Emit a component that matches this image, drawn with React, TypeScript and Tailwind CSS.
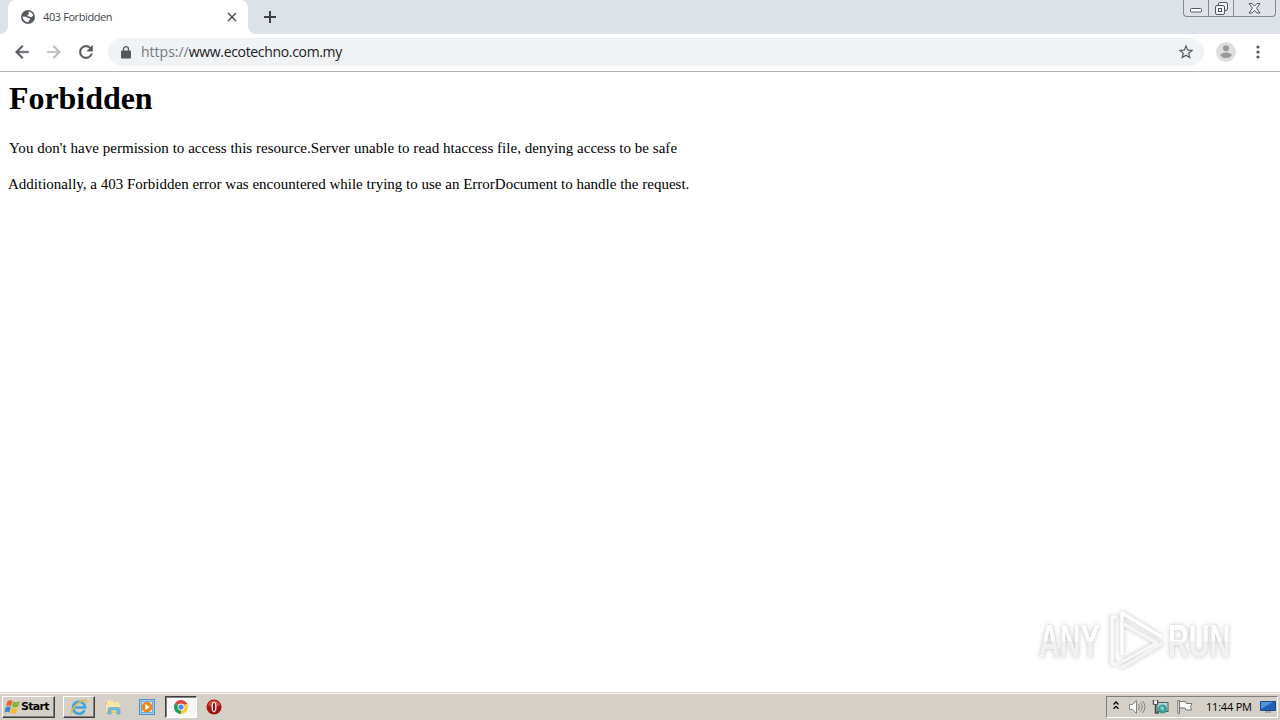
import React from 'react';

const WindowControls: React.FC = () => (
  <div className="flex h-[17px] w-[93px] rounded-b-[4px] border border-t-0 border-[#858990] bg-[#dfe2e8]">
    <div className="flex w-[25px] justify-center border-r border-[#858990] pt-[8px]">
      <svg width="13" height="5" viewBox="0 0 13 5" fill="#fff" stroke="#50545e">
        <rect x="0.5" y="0.5" width="11" height="3.5" rx="1" />
      </svg>
    </div>
    <div className="flex w-[25px] justify-center border-r border-[#858990] pt-[2px]">
      <svg width="13" height="13" viewBox="0 0 13 13" fill="#f5f6f8" stroke="#50545e">
        <rect x="3.5" y="0.5" width="9" height="8" rx="1.5" />
        <rect x="0.5" y="3.5" width="9" height="9" rx="1.5" />
        <rect x="3.5" y="6.5" width="3" height="3" />
      </svg>
    </div>
    <div className="flex flex-1 justify-center pt-[3px]">
      <svg width="13" height="11" viewBox="0 0 13 11" fill="#f5f6f8" stroke="#50545e">
        <path d="M1 .5h3l2.5 2.7L9 .5h3L8.5 5.2l3.5 4.8H9L6.5 7.3 4 10H1l3.5-4.8z" />
      </svg>
    </div>
  </div>
);

const TabStrip: React.FC = () => (
  <div className="flex h-[34px] bg-[#dde1e8]">
    <div className="flex w-2 items-end bg-white">
      <div className="h-full w-2 rounded-br-[8px] bg-[#dde1e8]" />
    </div>
    <div className="flex w-[240px] items-center rounded-t-[8px] bg-white pl-[13px] pr-[11px]">
      <svg className="shrink-0" width="14" height="14" viewBox="0 0 14 14">
        <circle cx="7" cy="7" r="7" fill="#585b60" />
        <path d="M7.6 1.4c2.4.3 4.3 2 4.8 4.4l-1.2.5-.9 1-1.7-.8-1.8-.3-.2-1.4 1.2-.6V3z" fill="#fff" />
        <path d="M1.5 6.6l3.6.2 1.7 1.1 1.8.3.5 1.4-1.3 1-.5 1.7c-2.9.2-5.4-2.2-5.8-5.7z" fill="#fff" />
      </svg>
      <span className="ml-[8px] whitespace-nowrap font-['Open_Sans'] text-[11px] tracking-[-0.4px] text-[#43464b]">403 Forbidden</span>
      <svg className="ml-auto shrink-0" width="10" height="10" viewBox="0 0 10 10" stroke="#55585d" strokeWidth="1.7">
        <path d="M1 1l8 8M9 1L1 9" />
      </svg>
    </div>
    <div className="flex w-2 bg-white">
      <div className="h-full w-2 rounded-bl-[8px] bg-[#dde1e8]" />
    </div>
    <svg className="ml-[7px] mt-[10px]" width="14" height="14" viewBox="0 0 14 14" stroke="#3c4045" strokeWidth="2">
      <path d="M7 1v12M1 7h12" />
    </svg>
    <div className="ml-auto pr-[4px]">
      <WindowControls />
    </div>
  </div>
);

const Toolbar: React.FC = () => (
  <div className="flex h-[38px] items-center border-b border-[#b3b3b3] bg-white pb-[1px] pl-[12px] pr-[12px]">
    <svg width="20" height="20" viewBox="0 0 24 24" fill="#55585d" stroke="#55585d" strokeWidth="0.5">
      <path d="M20 11H7.83l5.59-5.59L12 4l-8 8 8 8 1.41-1.41L7.83 13H20v-2z" />
    </svg>
    <svg className="ml-[12px]" width="20" height="20" viewBox="0 0 24 24" fill="#b9babc" stroke="#b9babc" strokeWidth="0.5">
      <path d="M12 4l-1.41 1.41L16.17 11H4v2h12.17l-5.58 5.59L12 20l8-8z" />
    </svg>
    <svg className="ml-[12px]" width="20" height="20" viewBox="0 0 24 24" fill="#55585d" stroke="#55585d" strokeWidth="0.5">
      <path d="M17.65 6.35C16.2 4.9 14.21 4 12 4c-4.42 0-7.99 3.58-7.99 8s3.57 8 7.99 8c3.73 0 6.84-2.55 7.73-6h-2.08c-.82 2.33-3.04 4-5.65 4-3.31 0-6-2.69-6-6s2.69-6 6-6c1.66 0 3.14.69 4.22 1.78L13 11h7V4l-2.35 2.35z" />
    </svg>
    <div className="ml-[12px] flex h-[28px] w-[1096px] items-center rounded-full bg-[#f0f2f4] pl-[13px] pr-[9px]">
      <svg width="10" height="13" viewBox="0 0 10 13">
        <path d="M2.5 5V3.2a2.5 2.5 0 0 1 5 0V5" fill="none" stroke="#55585d" strokeWidth="1.3" />
        <rect x="0" y="4.5" width="10" height="8" rx="1" fill="#55585d" />
      </svg>
      <span className="ml-[10px] whitespace-nowrap pb-[2px] font-['Open_Sans'] text-[14px] tracking-[-0.33px] text-[#202124]">
        <span className="tracking-[0px] text-[#74787d]">https://</span>www.ecotechno.com.my
      </span>
      <svg className="ml-auto" width="18" height="18" viewBox="0 0 24 24" fill="#55585d">
        <path d="M22 9.24l-7.19-.62L12 2 9.19 8.63 2 9.24l5.46 4.73L5.82 21 12 17.27 18.18 21l-1.63-7.03L22 9.24zM12 15.4l-3.76 2.27 1-4.28-3.32-2.88 4.38-.38L12 6.1l1.71 4.04 4.38.38-3.32 2.88 1 4.28L12 15.4z" />
      </svg>
    </div>
    <svg className="ml-[12px]" width="20" height="20" viewBox="0 0 20 20">
      <circle cx="10" cy="10" r="10" fill="#dededf" />
      <circle cx="10" cy="6.3" r="3" fill="#98999b" />
      <path d="M4.3 13.6c0-2 3.5-3 5.7-3s5.7 1 5.7 3c-1.3 1.7-3.3 2.5-5.7 2.5s-4.400-.8-5.700-2.500z" fill="#98999b" />
    </svg>
    <svg className="ml-[20px]" width="4" height="14" viewBox="0 0 4 14" fill="#55585d">
      <circle cx="2" cy="2" r="1.6" />
      <circle cx="2" cy="7" r="1.6" />
      <circle cx="2" cy="12" r="1.6" />
    </svg>
  </div>
);

const WatermarkWord: React.FC<{ text: string }> = ({ text }) => (
  <div className="w-[64px] shrink-0">
    <span className="block w-max origin-left scale-x-[0.61] bg-linear-to-b from-white from-50% to-[#f1f1f1] to-50% bg-clip-text font-['Liberation_Sans'] text-[47px] font-bold leading-none text-transparent">
      {text}
    </span>
  </div>
);

const Watermark: React.FC = () => (
  <div className="absolute left-[1039px] top-[536px] flex h-[64px] w-[200px] items-center drop-shadow-[0_0_2px_rgba(0,0,0,0.25)]">
    <WatermarkWord text="ANY" />
    <svg className="ml-[5px] shrink-0" width="58" height="62" viewBox="0 0 58 62" fill="none" strokeWidth="3.5" strokeLinejoin="round">
      <path d="M13 59l42-25" stroke="#f3f3f3" />
      <path d="M9 8H4v46l5 2" stroke="#fafafa" />
      <path d="M14 46V4l40 24" stroke="#fff" />
      <path d="M14 14l35 20-35 19" stroke="#f6f6f6" />
    </svg>
    <div className="ml-[2px]">
      <WatermarkWord text="RUN" />
    </div>
  </div>
);

const Page: React.FC = () => (
  <div className="relative h-[620px] bg-white pl-[8px] pt-[8px] font-['Liberation_Serif'] text-black">
    <h1 className="ml-[1px] whitespace-nowrap text-[32px] font-bold leading-[37px] tracking-[-0.05px]">Forbidden</h1>
    <p className="ml-[1px] mt-[22px] whitespace-nowrap text-[15px] leading-[18px] tracking-[0.03px]">
      You don't have permission to access this resource.Server unable to read htaccess file, denying access to be safe
    </p>
    <p className="mt-[18px] whitespace-nowrap text-[15px] leading-[18px]">
      Additionally, a 403 Forbidden error was encountered while trying to use an ErrorDocument to handle the request.
    </p>
    <Watermark />
  </div>
);

const Taskbar: React.FC = () => (
  <div className="flex h-[28px] items-start border-t border-[#d4d0c8] bg-[#d4d0c8]">
    <div className="flex h-[27px] w-full items-center border-t border-white pb-[1px] pl-[2px] pr-[2px]">
      <div className="flex h-[22px] w-[53px] items-center border border-b-[#404040] border-l-white border-r-[#404040] border-t-white pl-[1px] shadow-[inset_-1px_-1px_0_#808080]">
        <svg width="17" height="16" viewBox="0 0 17 16">
          <path d="M3.500 2C5.500.8 7 1 8.500 2L7 7.300C5.500 6.300 4 6.300 2 7.300z" fill="#e8642a" />
          <path d="M9.300 2.500c2 1 3.700 1 6.200-.2L14 7.700c-2.200 1-4 1-6 .1z" fill="#7db73a" />
          <path d="M1.800 8.200c2-1 3.500-.9 5 0l-1.500 5.400c-1.500-1-3-1-5 0z" fill="#3b86d0" />
          <path d="M7.700 8.700c2 1 3.800 1 6 0l-1.500 5.300c-2.200 1.100-4 1-6 0z" fill="#f7bd28" />
        </svg>
        <span className="pt-[2px] font-['DejaVu_Sans'] text-[11px] font-bold tracking-[-0.7px] text-black">Start</span>
      </div>

      <div className="ml-[8px] flex h-[22px] w-[32px] items-center justify-center border border-b-[#404040] border-l-white border-r-[#404040] border-t-white shadow-[inset_-1px_-1px_0_#808080]">
        <svg width="18" height="18" viewBox="0 0 18 18" fill="none">
          <path d="M14.500 12.200A6 6 0 1 1 15 9.500H5" stroke="#3fa4e2" strokeWidth="2.600" />
          <path d="M2 15.500C.3 13 5 6.500 10 3.800c4-2.200 7-2 6.200 1" stroke="#e9b83a" strokeWidth="1.500" />
        </svg>
      </div>

      <svg className="ml-[10px]" width="17" height="16" viewBox="0 0 17 16">
        <path d="M1 3h5l1.500 1.500H14V14H1z" fill="#e7c866" />
        <path d="M2 1.500h5L8 3h6v3H2z" fill="#f5e6a4" />
        <path d="M1 5.500h14v7H1z" fill="#f7e9a9" />
        <path d="M3 15V9.500C3 8 15 8 15 9.500V15h-3v-4H6v4z" fill="#78bde0" stroke="#4c9dcb" strokeWidth=".6" />
      </svg>

      <svg className="ml-[17px]" width="16" height="16" viewBox="0 0 16 16">
        <rect x=".5" y=".5" width="15" height="15" fill="#a7cde9" stroke="#4d93c9" />
        <rect x="2.500" y="2.500" width="11" height="11" fill="#d6e9f6" stroke="#70a9d2" />
        <circle cx="8" cy="8" r="5.300" fill="#ef8519" />
        <path d="M6.300 5l4.700 3-4.700 3z" fill="#fff" />
      </svg>

      <div className="ml-[10px] flex h-[22px] w-[32px] items-center justify-center border border-b-white border-l-[#404040] border-r-white border-t-[#404040] bg-[#f8f7f5] shadow-[inset_1px_1px_0_#808080]">
        <svg width="14" height="14" viewBox="0 0 14 14">
          <path d="M7 7L.94 3.500A7 7 0 0 1 13.060 3.500z" fill="#dc4437" />
          <path d="M7 7L.94 3.500A7 7 0 0 0 7 14z" fill="#229b55" />
          <path d="M7 7l6.060-3.500A7 7 0 0 1 7 14z" fill="#fbcb3c" />
          <path d="M7 3.500h6.060" stroke="#dc4437" strokeWidth="1" />
          <circle cx="7" cy="7" r="3.400" fill="#fff" />
          <circle cx="7" cy="7" r="2.600" fill="#4a86e8" />
        </svg>
      </div>

      <svg className="ml-[9px]" width="16" height="16" viewBox="0 0 16 16">
        <circle cx="8" cy="8" r="7.500" fill="#a41616" />
        <path d="M2 6a6.300 6.300 0 0 1 12 0c-3 2-9 2-12 0z" fill="#d14b45" />
        <ellipse cx="8" cy="8" rx="2.500" ry="5.200" fill="#f5eaea" />
        <ellipse cx="8" cy="8" rx="1.100" ry="4.200" fill="#8b1010" />
      </svg>

      <div className="ml-auto flex h-[22px] w-[172px] items-center border border-b-white border-l-[#808080] border-r-white border-t-[#808080] pl-[6px]">
        <svg className="mb-[3px]" width="6" height="9" viewBox="0 0 6 9" fill="none" stroke="#000" strokeWidth="1.300">
          <path d="M.5 3.500L3 1l2.500 2.500M.5 7.800L3 5.300l2.500 2.500" />
        </svg>
        <svg className="ml-[10px]" width="17" height="16" viewBox="0 0 17 16" fill="none" stroke="#858585">
          <path d="M.5 5.500h3l4-4v13l-4-4h-3z" fill="#fafafa" />
          <path d="M9.500 5q2 3 0 6M11.500 3.500q3.500 4.500 0 9M13.500 2q5 6 0 12" />
        </svg>
        <svg className="ml-[6px]" width="17" height="16" viewBox="0 0 17 16" fill="none">
          <rect x="5" y="3.500" width="11" height="9" fill="#b5d5dd" stroke="#4d5b61" />
          <circle cx="10.500" cy="10" r="4.500" fill="#39a09c" />
          <path d="M8 9l2-2 2 2-1 3z" fill="#92d3cc" />
          <path d="M1.500 1v4h4V1M3.500 5v9H7" stroke="#4b4b4b" strokeWidth="1.500" />
          <rect x="2" y="2" width="3" height="3" fill="#eee" />
        </svg>
        <svg className="ml-[8px]" width="16" height="16" viewBox="0 0 16 16" fill="#fafafa" stroke="#747474">
          <path d="M2.500 2.500h6l1 2h5.500l-1.500 3 1 3.500H9l-1-2H2.500" />
          <path d="M.8 1.500h1.700v13H.8z" />
        </svg>
        <span className="ml-[13px] w-[46px] whitespace-nowrap pt-[1px] font-['Open_Sans'] text-[11px] tracking-[-0.2px] text-black">11:44 PM</span>
        <svg className="ml-[8px] shrink-0" width="16" height="14" viewBox="0 0 16 14">
          <path d="M.5 1.500h15v9H.5z" fill="#2360b5" stroke="#254878" />
          <path d="M1 2h12L1 9z" fill="#4d95df" />
          <path d="M5 11h6v2H5z" fill="#9daabb" />
        </svg>
      </div>
    </div>
  </div>
);

export default function App() {
  return (
    <div className="flex h-[720px] w-[1280px] flex-col overflow-hidden bg-white">
      <TabStrip />
      <Toolbar />
      <Page />
      <Taskbar />
    </div>
  );
}
